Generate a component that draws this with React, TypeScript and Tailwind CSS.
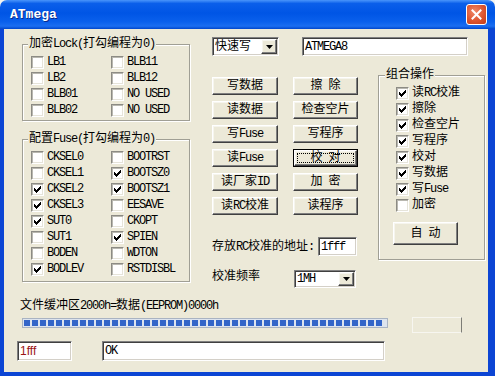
import React from "react";

const FONT =
  "font-['Liberation_Mono','Noto_Sans_CJK_SC',monospace] text-[12px] leading-[14px] text-black";
const sunken =
  "border border-t-[#808080] border-l-[#808080] border-r-white border-b-white shadow-[inset_1px_1px_0_#404040,inset_-1px_-1px_0_#d4d0c8] bg-white";
const box =
  "border border-t-[#8c8b84] border-l-[#8c8b84] border-r-white border-b-white shadow-[inset_1px_1px_0_#b9b8b0,inset_-1px_-1px_0_#e6e4da] bg-white";
const raised =
  "border border-t-white border-l-white border-r-[#404040] border-b-[#404040] shadow-[inset_-1px_-1px_0_#808080,inset_1px_1px_0_#f6f5ee] bg-[#ece9d8]";
const group =
  "border border-[#a09f95] shadow-[1px_1px_0_#fff,inset_1px_1px_0_#fff]";

const CJK = /([\u3000-\u9fff\uff00-\uffef]+)/;

// SimSun-like: CJK at 12px, latin squeezed to 6px per char
function Mix({ text }: { text: string }) {
  return (
    <>
      {text
        .split(CJK)
        .filter(Boolean)
        .map((part, i) =>
          CJK.test(part) ? (
            <span key={i}>{part}</span>
          ) : (
            <span key={i} className="whitespace-pre tracking-[-1.2px]">
              {part}
            </span>
          )
        )}
    </>
  );
}

const CHECK = [
  [6, 0, 1],
  [5, 1, 2],
  [0, 2, 1],
  [4, 2, 3],
  [0, 3, 2],
  [3, 3, 3],
  [0, 4, 5],
  [1, 5, 3],
  [2, 6, 1],
];

function Check({ label, on }: { label: string; on?: boolean }) {
  return (
    <div className="flex h-[16px] items-center gap-[3px]">
      <span className={`flex h-[13px] w-[13px] shrink-0 items-center justify-center ${box}`}>
        {on && (
          <svg width="7" height="7" shapeRendering="crispEdges">
            {CHECK.map(([x, y, w], i) => (
              <rect key={i} x={x} y={y} width={w} height={1} fill="#000" />
            ))}
          </svg>
        )}
      </span>
      <span className="whitespace-nowrap">
        <Mix text={label} />
      </span>
    </div>
  );
}

function Btn({ label, def }: { label: string; def?: boolean }) {
  if (def) {
    return (
      <div className="flex h-[18px] border border-black">
        <div className={`flex flex-1 p-[2px] ${raised}`}>
          <div className="flex flex-1 items-center justify-center border border-dotted border-black">
            <Mix text={label} />
          </div>
        </div>
      </div>
    );
  }
  return (
    <div className={`flex h-[18px] items-center justify-center ${raised}`}>
      <Mix text={label} />
    </div>
  );
}

function Combo({ text, className }: { text: string; className: string }) {
  return (
    <div className={`flex ${sunken} ${className}`}>
      <span className="flex flex-1 items-center pl-[2px]">
        <Mix text={text} />
      </span>
      <span className={`my-[1px] mr-[1px] flex w-[16px] items-center justify-center ${raised}`}>
        <svg width="7" height="4">
          <path d="M0 0h7L3.5 4z" fill="#000" />
        </svg>
      </span>
    </div>
  );
}

const lockLeft = ["LB1", "LB2", "BLB01", "BLB02"];
const lockRight = ["BLB11", "BLB12", "NO USED", "NO USED"];

const fuseLeft: [string, boolean][] = [
  ["CKSEL0", false],
  ["CKSEL1", false],
  ["CKSEL2", true],
  ["CKSEL3", true],
  ["SUT0", true],
  ["SUT1", false],
  ["BODEN", false],
  ["BODLEV", true],
];
const fuseRight: [string, boolean][] = [
  ["BOOTRST", false],
  ["BOOTSZ0", true],
  ["BOOTSZ1", true],
  ["EESAVE", false],
  ["CKOPT", false],
  ["SPIEN", true],
  ["WDTON", false],
  ["RSTDISBL", false],
];

const buttons: [string, boolean?][] = [
  ["写数据"],
  ["擦 除"],
  ["读数据"],
  ["检查空片"],
  ["写Fuse"],
  ["写程序"],
  ["读Fuse"],
  ["校 对", true],
  ["读厂家ID"],
  ["加 密"],
  ["读RC校准"],
  ["读程序"],
];

const combined: [string, boolean][] = [
  ["读RC校准", true],
  ["擦除", true],
  ["检查空片", true],
  ["写程序", true],
  ["校对", true],
  ["写数据", true],
  ["写Fuse", true],
  ["加密", false],
];

export default function App() {
  return (
    <div className={`h-[376px] w-[495px] overflow-hidden bg-[#f4f4f0] ${FONT}`}>
      {/* title bar */}
      <div className="flex h-[29px] items-center justify-between rounded-t-[7px] bg-[linear-gradient(180deg,#4a95fb_0%,#0b5fea_12%,#0055e5_45%,#0a60ec_75%,#1b6ef1_90%,#0046cc_100%)] pl-[10px] pr-[8px]">
        <span className="font-['Liberation_Mono',monospace] text-[13px] font-bold text-white [text-shadow:1px_1px_#0b2a8a]">
          ATmega
        </span>
        <span className="flex h-[21px] w-[21px] items-center justify-center rounded-[3px] border border-white bg-[radial-gradient(circle_at_40%_35%,#f08a6a_0%,#dd5530_55%,#c23c18_100%)]">
          <svg width="11" height="11" viewBox="0 0 11 11">
            <path d="M1.5 1.5l8 8M9.5 1.5l-8 8" stroke="#fff" strokeWidth="2" strokeLinecap="square" />
          </svg>
        </span>
      </div>

      {/* window body */}
      <div className="flex h-[347px] flex-col border-b-[4px] border-l-[4px] border-r-[7px] border-[#0c45d4] bg-[#ece9d8] pl-[13px] pt-[8px]">
        <div className="ml-[5px] flex items-start">
          {/* left groups */}
          <div className="flex w-[168px] flex-col">
            <fieldset className={group}>
              <legend className="ml-[5px] bg-[#ece9d8] px-[1px]">
                <Mix text="加密Lock(打勾编程为0)" />
              </legend>
              <div className="grid grid-cols-[80px_1fr] pb-[2px] pl-[8px] pt-[3px]">
                <div>
                  {lockLeft.map((l, i) => (
                    <Check key={i} label={l} />
                  ))}
                </div>
                <div>
                  {lockRight.map((l, i) => (
                    <Check key={i} label={l} />
                  ))}
                </div>
              </div>
            </fieldset>
            <fieldset className={`mt-[11px] ${group}`}>
              <legend className="ml-[5px] bg-[#ece9d8] px-[1px]">
                <Mix text="配置Fuse(打勾编程为0)" />
              </legend>
              <div className="grid grid-cols-[80px_1fr] pb-[4px] pl-[8px] pt-[3px]">
                <div>
                  {fuseLeft.map(([l, on]) => (
                    <Check key={l} label={l} on={on} />
                  ))}
                </div>
                <div>
                  {fuseRight.map(([l, on]) => (
                    <Check key={l} label={l} on={on} />
                  ))}
                </div>
              </div>
            </fieldset>
          </div>

          {/* right area */}
          <div className="ml-[22px] flex flex-col">
            <div className="flex">
              <Combo text="快速写" className="h-[19px] w-[67px]" />
              <div className={`ml-[23px] flex h-[19px] w-[166px] items-center pl-[2px] ${sunken}`}>
                <Mix text="ATMEGA8" />
              </div>
            </div>

            <div className="mt-[12px] flex items-start">
              <div className="flex w-[146px] flex-col pt-[9px]">
                <div className="grid grid-cols-[66px_65px] gap-x-[15px] gap-y-[6px]">
                  {buttons.map(([l, def]) => (
                    <Btn key={l} label={l} def={def} />
                  ))}
                </div>
                <div className="mt-[22px] flex items-center">
                  <span className="w-[106px] whitespace-nowrap">
                    <Mix text="存放RC校准的地址:" />
                  </span>
                  <div className={`flex h-[19px] w-[39px] items-center pl-[2px] ${sunken}`}>
                    <Mix text="1fff" />
                  </div>
                </div>
                <div className="mt-[14px] flex items-start">
                  <span className="w-[82px]">校准频率</span>
                  <Combo text="1MH" className="h-[18px] w-[62px]" />
                </div>
              </div>

              <fieldset className={`ml-[20px] w-[107px] ${group}`}>
                <legend className="ml-[6px] bg-[#ece9d8] px-[1px]">组合操作</legend>
                <div className="pl-[17px] pt-[3px]">
                  {combined.map(([l, on]) => (
                    <Check key={l} label={l} on={on} />
                  ))}
                </div>
                <div className="pb-[14px] pl-[14px] pt-[9px]">
                  <div className={`flex h-[23px] w-[65px] items-center justify-center ${raised}`}>
                    <Mix text="自 动" />
                  </div>
                </div>
              </fieldset>
            </div>
          </div>
        </div>

        {/* buffer info */}
        <div className="ml-[3px] mt-[11px]">
          <Mix text="文件缓冲区2000h=数据(EEPROM)0000h" />
        </div>
        <div className="ml-[5px] mt-[5px] flex items-start">
          <div className="flex h-[10px] w-[366px] gap-[2px] border border-[#a9b3c2] bg-[#dde4ee] p-[1px]">
            {Array.from({ length: 45 }).map((_, i) => (
              <span key={i} className="h-full w-[6px] bg-[#3365c8]" />
            ))}
          </div>
          <div className="-mt-px ml-[24px] h-[16px] w-[50px] border border-[#f7f6f0] border-r-[#7d7d76]" />
        </div>
        <div className="mt-[8px] flex">
          <div className={`flex h-[20px] w-[55px] items-center pl-[2px] font-['Liberation_Sans',sans-serif] text-[12px] text-[#9a1414] ${sunken}`}>
            1fff
          </div>
          <div className={`ml-[30px] flex h-[20px] w-[283px] items-center pl-[2px] ${sunken}`}>
            <Mix text="OK" />
          </div>
        </div>
      </div>
    </div>
  );
}
